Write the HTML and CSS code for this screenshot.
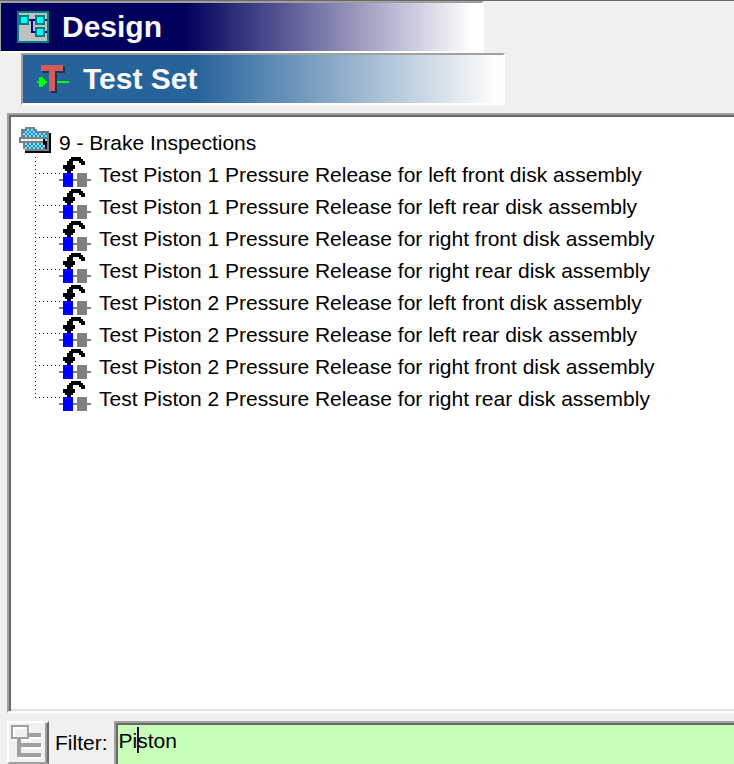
FILE: index.html
```html
<!DOCTYPE html>
<html lang="en">
<head>
    <meta charset="UTF-8">
    <meta name="viewport" content="width=device-width, initial-scale=1.0">
    <title>Design - Test Set</title>
    <link rel="stylesheet" href="styles.css">
</head>
<body>
    <svg class="symbols" width="0" height="0" aria-hidden="true">
        <symbol id="icon-test" viewBox="0 0 32 32" shape-rendering="crispEdges">
            <path d="M0 22h32v2H0z" fill="#808080"/>
            <path d="M4 16h10v14H4z" fill="#0000ff"/>
            <path d="M18 16h10v14H18z" fill="#808080"/>
            <path d="M12 0h10v2h2v2h2v4h-4V6h-2V4h-6v4h2v4h-2v2h-2v2H8v-2H6v-2H4V8h4V4h2V2h2z" fill="#000"/>
        </symbol>
    </svg>

    <header class="banners">
        <h1 class="banner banner-design">
            <svg width="32" height="32" viewBox="0 0 32 32" shape-rendering="crispEdges" aria-hidden="true">
                <path d="M0 0h32v32H0z" fill="#008080"/>
                <path d="M2 2h28v28H2z" fill="#c0c0c0"/>
                <path d="M2 8h28v2H2zM14 10h2v12h-2zM16 20h14v2H16z" fill="#000080"/>
                <path d="M2 4h10v10H2zM18 4h10v10H18zM18 16h10v10H18z" fill="#008080"/>
                <path d="M4 6h6v6H4zM20 6h6v6h-6zM20 18h6v6h-6z" fill="#00ffff"/>
            </svg>
            <span>Design</span>
        </h1>
        <h2 class="banner banner-set">
            <svg width="32" height="28" viewBox="0 0 32 28" shape-rendering="crispEdges" aria-hidden="true">
                <path d="M6 2h22v6h-8v20h-6V8H6z" fill="#18344f"/>
                <path d="M0 16h2v-4h4v2h2v2h2v2h-2v2H6v2H2v-4H0zM20 16h12v2H20z" fill="#00ff00"/>
                <path d="M4 0h22v6h-8v20h-6V6H4z" fill="#d55a5a"/>
            </svg>
            <span>Test Set</span>
        </h2>
    </header>

    <main class="tree-panel">
        <div class="folder">
            <svg width="32" height="28" viewBox="0 0 32 28" shape-rendering="crispEdges" aria-hidden="true">
                <defs>
                    <pattern id="dither" width="4" height="4" patternUnits="userSpaceOnUse">
                        <path d="M0 0h4v4H0z" fill="#a8d4e6"/>
                        <path d="M0 0h2v2H0zM2 2h2v2H2z" fill="#0099cc"/>
                    </pattern>
                    <pattern id="dither-light" width="4" height="4" patternUnits="userSpaceOnUse">
                        <path d="M0 0h4v4H0z" fill="#fff"/>
                        <path d="M0 0h2v4H0z" fill="#cce6f2"/>
                    </pattern>
                </defs>
                <path d="M6 24h24V6h2v20H6z" fill="#000"/>
                <path d="M6 0h10v2h2v2h12v20H6v-2H4v-6H2V2h4z" fill="#808080"/>
                <path d="M6 2h10v2h2v2h10v16H6v-6h18v-6H4V4h2z" fill="url(#dither)"/>
                <path d="M0 10h26v6H0z" fill="#808080"/>
                <path d="M2 12h22v2H2z" fill="url(#dither-light)"/>
                <path d="M24 12h2v2h2v8h-2v-4h-2z" fill="#000"/>
            </svg>
            <span>9 - Brake Inspections</span>
        </div>
        <ul class="tests">
            <li><svg width="32" height="32" aria-hidden="true"><use href="#icon-test"/></svg><span>Test Piston 1 Pressure Release for left front disk assembly</span></li>
            <li><svg width="32" height="32" aria-hidden="true"><use href="#icon-test"/></svg><span>Test Piston 1 Pressure Release for left rear disk assembly</span></li>
            <li><svg width="32" height="32" aria-hidden="true"><use href="#icon-test"/></svg><span>Test Piston 1 Pressure Release for right front disk assembly</span></li>
            <li><svg width="32" height="32" aria-hidden="true"><use href="#icon-test"/></svg><span>Test Piston 1 Pressure Release for right rear disk assembly</span></li>
            <li><svg width="32" height="32" aria-hidden="true"><use href="#icon-test"/></svg><span>Test Piston 2 Pressure Release for left front disk assembly</span></li>
            <li><svg width="32" height="32" aria-hidden="true"><use href="#icon-test"/></svg><span>Test Piston 2 Pressure Release for left rear disk assembly</span></li>
            <li><svg width="32" height="32" aria-hidden="true"><use href="#icon-test"/></svg><span>Test Piston 2 Pressure Release for right front disk assembly</span></li>
            <li><svg width="32" height="32" aria-hidden="true"><use href="#icon-test"/></svg><span>Test Piston 2 Pressure Release for right rear disk assembly</span></li>
        </ul>
    </main>

    <form class="filter-bar">
        <button type="button" class="tree-button" aria-label="Show tree">
            <svg width="34" height="34" viewBox="0 0 34 34" shape-rendering="crispEdges" aria-hidden="true">
                <path d="M2 2h18v14H2zM20 10h12v4H20zM12 20h20v4H12zM8 30h24v4H8z" fill="#fff"/>
                <path d="M18 8h12v4H18zM6 14h4v4h20v4H10v6h20v4H6z" fill="#a0a0a0"/>
                <path d="M0 0h18v14H0z" fill="#a0a0a0"/>
                <path d="M2 2h14v10H2z" fill="#fff"/>
                <path d="M4 4h12v8H4z" fill="#f0f0f0"/>
            </svg>
        </button>
        <label for="filter">Filter:</label>
        <div class="filter-field">
            <input id="filter" type="text" value="Piston">
            <span class="caret"></span>
        </div>
    </form>
</body>
</html>
```
FILE: styles.css
```css
* {
    box-sizing: border-box;
}

html,
body {
    height: 100%;
}

body {
    margin: 0;
    display: flex;
    flex-direction: column;
    overflow: hidden;
    border-top: 1px solid #696969;
    background: #f0f0f0;
    color: #000;
    font-family: "Liberation Sans", Arial, sans-serif;
    font-size: 21px;
}

svg {
    display: block;
    flex: none;
}

.symbols {
    position: absolute;
}

.banners {
    flex: none;
}

.banner {
    display: flex;
    align-items: center;
    gap: 13px;
    width: 66%;
    height: 52px;
    margin: 0;
    border: 2px solid #a0a0a0;
    border-right-color: #fff;
    border-bottom-color: #fff;
    padding-left: 16px;
    color: #f8f8f8;
    font-size: 30px;
    line-height: 36px;
}

.banner-design {
    border-left-width: 1px;
    background: linear-gradient(to right, #00005c 38%, #fff 98%);
}

.banner-set {
    gap: 14px;
    margin-left: 21px;
    padding-left: 14px;
    background: linear-gradient(to right, #26639a 36%, #fcfcfc 98%);
}

.tree-panel {
    flex: 1;
    min-height: 0;
    margin: 8px 0 8px 7px;
    border: 2px solid #a0a0a0;
    border-right: 0;
    border-bottom-color: #fff;
    padding: 10px 8px;
    background: #fff;
    box-shadow: inset 2px 2px #696969, inset 0 -2px #e3e3e3;
}

.folder {
    display: flex;
    align-items: center;
    gap: 8px;
    height: 32px;
    padding-left: 2px;
}

.folder span,
.tests span {
    padding-top: 4px;
}

.tests {
    margin: 0 0 0 18px;
    padding: 0;
    list-style: none;
    background: repeating-linear-gradient(to bottom, #000080 0 1px, transparent 1px 4px) 0 0 / 1px 241px no-repeat;
}

.tests li {
    display: flex;
    align-items: center;
    gap: 8px;
    height: 32px;
    padding-left: 24px;
    white-space: nowrap;
    background: repeating-linear-gradient(to right, #000080 0 1px, transparent 1px 4px) 0 16px / 26px 1px no-repeat;
}

.filter-bar {
    display: flex;
    align-items: center;
    flex: none;
    height: 43px;
    margin: 0;
    padding-left: 7px;
}

.tree-button {
    display: flex;
    width: 42px;
    height: 43px;
    border: 2px solid #fff;
    border-right-color: #696969;
    border-bottom-color: #a0a0a0;
    padding: 2px;
    background: #f0f0f0;
    box-shadow: inset -2px 0 #a0a0a0;
}

.filter-bar label {
    margin: 0 6px;
}

.filter-field {
    position: relative;
    flex: 1;
    height: 43px;
}

.filter-field input {
    width: 100%;
    height: 43px;
    border: 2px solid #a0a0a0;
    border-width: 2px 0 0 2px;
    border-radius: 0;
    padding: 0 3px 5px;
    background: #c8ffb8;
    box-shadow: inset 2px 2px #696969;
    color: #000;
    font: inherit;
    outline: none;
}

.caret {
    position: absolute;
    top: 6px;
    left: 23px;
    width: 2px;
    height: 26px;
    background: #380047;
}
```
